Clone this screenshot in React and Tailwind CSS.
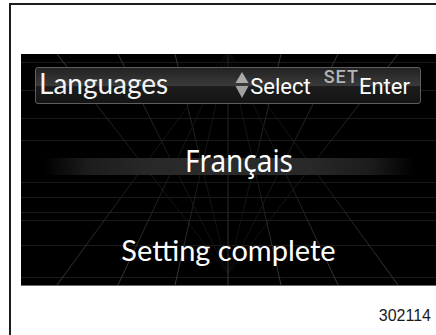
import React from "react";

const topFan = [36, 97, 154, 207, 260, 317, 377];
const rows = [8, 36, 64, 86, 128, 143, 158, 166, 191, 223];

function Grid() {
  return (
    <svg className="absolute inset-0" width="415" height="231" viewBox="0 0 415 231">
      <defs>
        <linearGradient id="fadeDown" gradientUnits="userSpaceOnUse" x1="0" y1="0" x2="0" y2="220">
          <stop offset="0" stopColor="#383838" />
          <stop offset="0.45" stopColor="#1a1a1a" />
          <stop offset="1" stopColor="#0c0c0c" />
        </linearGradient>
        <linearGradient id="fadeUp" gradientUnits="userSpaceOnUse" x1="0" y1="231" x2="0" y2="0">
          <stop offset="0" stopColor="#383838" />
          <stop offset="0.45" stopColor="#1a1a1a" />
          <stop offset="1" stopColor="#0c0c0c" />
        </linearGradient>
      </defs>
      {rows.map((y) => (
        <line key={"h" + y} x1="0" y1={y + 0.5} x2="415" y2={y + 0.5} stroke="#1a1a1a" strokeWidth="1" />
      ))}
      {topFan.map((x) => (
        <line key={"t" + x} x1={x} y1="0" x2="207" y2="220" stroke="url(#fadeDown)" strokeWidth="1" />
      ))}
      {topFan.map((x) => (
        <line key={"b" + x} x1={x} y1="231" x2="207" y2="-3" stroke="url(#fadeUp)" strokeWidth="1" />
      ))}
    </svg>
  );
}

function Arrows() {
  return (
    <svg width="14" height="28" viewBox="0 0 14 28">
      <polygon points="7,0 13.5,11 0.5,11" fill="#a9a9a9" />
      <polygon points="0.5,14 13.5,14 7,26" fill="#a0a0a0" />
    </svg>
  );
}

export default function App() {
  return (
    <div className="w-[436px] h-[335px] overflow-hidden bg-white">
      <div className="ml-[9px] mt-[3px] h-[332px] border-l-2 border-t-2 border-[#1c1c1c] pl-[10px] pt-[49px]">
        <div className="relative h-[232px] bg-black border-b border-[#6a6a6a] overflow-hidden">
          <Grid />
          <div className="relative flex flex-col">
            <div className="mt-[13px] ml-[14px] w-[386px] h-[37px] rounded-[3px] border border-[#5e5e5e] bg-[linear-gradient(180deg,#222_0%,#3a3a3a_50%,#1c1c1c_53%,#141414_100%)] flex items-start">
              <span className="ml-[3px] mt-[1px] text-[28px] leading-[28px] text-[#f4f4f4] font-['Lato',sans-serif]">
                Languages
              </span>
              <div className="ml-[67px] mt-[4px]">
                <Arrows />
              </div>
              <span className="ml-[1px] mt-[8px] text-[22px] leading-[22px] text-white font-['Roboto',sans-serif]">
                Select
              </span>
              <span className="ml-[13px] mt-[0px] text-[18px] leading-[18px] font-medium tracking-[1px] text-[#b4b4b4] font-['Roboto',sans-serif]">
                SET
              </span>
              <span className="mt-[8px] text-[22px] leading-[22px] text-white font-['Roboto',sans-serif]">
                Enter
              </span>
            </div>
            <div className="mt-[36px] h-[40px] flex justify-center [background:linear-gradient(90deg,rgba(40,40,40,0)_0%,#1c1c1c_12%,#282828_28%,#2b2b2b_50%,#282828_72%,#1c1c1c_88%,rgba(40,40,40,0)_100%)_22px_18px/372px_17px_no-repeat]">
              <span className="ml-[20px] text-[31px] leading-[40px] text-white scale-x-[0.9] font-['Noto_Sans',sans-serif]">
                Français
              </span>
            </div>
            <div className="mt-[52px] h-[36px] flex justify-center">
              <span className="text-[29px] leading-[36px] text-white font-['Lato',sans-serif]">
                Setting complete
              </span>
            </div>
          </div>
        </div>
        <div className="mt-[22px] flex justify-end pr-[5px]">
          <span className="text-[16px] leading-[16px] text-[#1a1a1a] font-['Liberation_Sans',sans-serif]">
            302114
          </span>
        </div>
      </div>
    </div>
  );
}
